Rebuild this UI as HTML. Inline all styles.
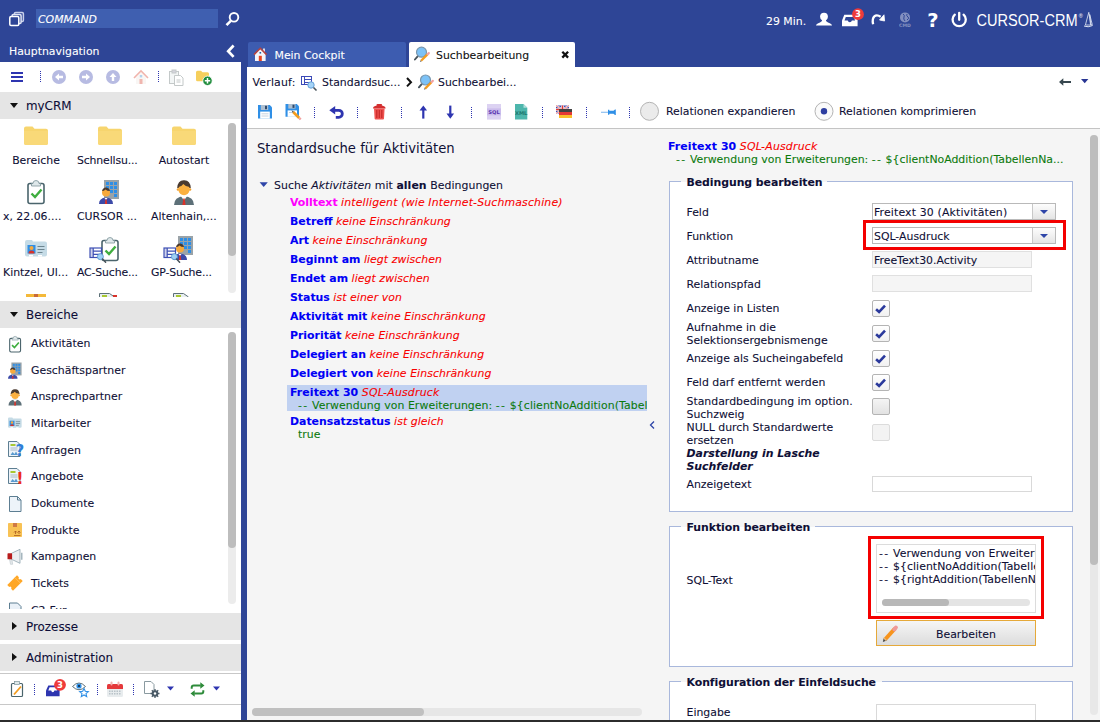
<!DOCTYPE html>
<html><head><meta charset="utf-8">
<style>
*{box-sizing:border-box;margin:0;padding:0}
html,body{width:1100px;height:722px;overflow:hidden;background:#fff}
body{position:relative;font-family:"DejaVu Sans","Liberation Sans",sans-serif;font-size:10.9px;color:#0f0f36;-webkit-text-stroke:.09px}
.abs{position:absolute}
#top{left:0;top:0;width:1100px;height:66.600px;background:#2e4596}
#leftblue{left:241px;top:62px;width:6px;height:660px;background:#2e4596}
#cmd{left:36px;top:9px;width:182px;height:19px;background:#3f5fb0;color:#fff;font-style:italic;font-size:10.9px;line-height:19px;padding-left:2px}
#hn{left:9px;top:43px;color:#fff;font-size:10.9px;line-height:16px}
.tab{top:42px;height:25px;line-height:25px;font-size:10.9px;border-radius:2px 2px 0 0}
#tab1{left:247.500px;width:158px;background:#3d5cb0;color:#fff}
#tab2{left:409px;width:166px;background:#fff;color:#111}
#left{left:0;top:62px;width:241px;height:653px;background:#fff;overflow:hidden}
.sec{left:0;width:241px;background:#e5e5e5;font-size:11.9px;line-height:27px;color:#0d0d38}
.sec span{position:absolute;left:26px}
.tri-d{position:absolute;left:9.500px;top:10.500px;width:0;height:0;border-left:4px solid transparent;border-right:4px solid transparent;border-top:5px solid #111}
.tri-r{position:absolute;left:12px;top:9px;width:0;height:0;border-top:4px solid transparent;border-bottom:4px solid transparent;border-left:5px solid #111}
.t{position:absolute;white-space:nowrap}
.b{font-weight:bold;color:#0000f5}
.r{font-style:italic;color:#f80000}
.g{color:#0c7a0c}
.m{font-weight:bold;color:#ff00ff}
.lab{position:absolute;width:66px;text-align:center;font-size:10.9px;line-height:14px;white-space:nowrap;overflow:visible}
.li{position:absolute;left:31px;font-size:10.9px;line-height:14px;white-space:nowrap}
.tr{position:absolute;left:0;white-space:nowrap}
.fs{position:absolute;border:1px solid #a9b8dc;background:#fff}
.lg{position:absolute;background:linear-gradient(#f5f5f5 5.700px,#fff 5.700px);font-weight:bold;line-height:14px;padding-left:5.500px;letter-spacing:-.05px;white-space:nowrap}
.fl{position:absolute;left:686.500px;line-height:14px;white-space:nowrap}
.sel{position:absolute;width:184px;height:17px;border:1px solid #b9b9b9;background:#fff;line-height:14px;padding-left:1px;white-space:nowrap}
.sel i{position:absolute;right:0;top:0;width:23px;height:15px;background:linear-gradient(#fdfdfd,#e4e4e4);border-left:1px solid #c8c8c8}
.sel i:after{content:"";position:absolute;left:7px;top:6px;border-left:4px solid transparent;border-right:4px solid transparent;border-top:4.500px solid #2e45a8}
.inp{position:absolute;height:16px;border:1px solid #d9d9d9;background:#fff;line-height:14px;padding-left:1px;white-space:nowrap}
.ro{background:#f5f5f5;border-color:#e0e0e0}
.cb{position:absolute;left:872px;width:17.500px;height:17px;border:1px solid #b4b4b4;border-radius:2px;background:linear-gradient(#fff,#f1f1f1)}

.cb.off{background:linear-gradient(#f4f4f4,#e2e2e2)}
.cb.dis{background:#f3f3f3;border-color:#dcdcdc}
.t,.lab,.li,.fl,#tree,#hn{margin-top:1px}
.lg{margin-top:1.800px}
.sec span{top:1px}
.sel,.inp{padding-top:1.500px}
#cmd{padding-top:1px}
.r{letter-spacing:.07px}
.hy{letter-spacing:1.300px}
</style></head><body>
<div id="top" class="abs"></div>
<div id="cmd" class="abs">COMMAND</div>
<div id="hn" class="abs">Hauptnavigation</div>
<div id="tab1" class="abs tab"><span class="t" style="left:27px">Mein Cockpit</span></div>
<div id="tab2" class="abs tab"><span class="t" style="left:27px">Suchbearbeitung</span></div>
<svg class="abs" style="left:0;top:0" width="1100" height="66" viewBox="0 0 1100 66">
 <!-- windows icon -->
 <g fill="#2e4596" stroke="#fff" stroke-width="1.500"><rect x="14.400" y="12.600" width="9" height="8.800" rx="1.200" stroke="#c8d0ea"/><rect x="12.100" y="14.600" width="9" height="8.800" rx="1.200" stroke="#dfe4f4"/><rect x="9.800" y="16.600" width="9" height="8.800" rx="1.200"/></g>
 <!-- search -->
 <circle cx="234" cy="17.300" r="4.300" fill="none" stroke="#fff" stroke-width="1.900"/><path d="M230.800 20.800l-4.300 4.300" stroke="#fff" stroke-width="2.600" stroke-linecap="butt"/>
 <!-- collapse chevron -->
 <path d="M233.600 45.500l-5.400 5.700 5.400 5.700" fill="none" stroke="#fff" stroke-width="2.700"/>
 <!-- user -->
 <circle cx="824" cy="16.600" r="3.900" fill="#fff"/><path d="M822.300 19.500h3.400q0 2.200 2.300 3 4 1.300 4 3h-16q0-1.700 4-3 2.300-.8 2.300-3z" fill="#fff"/>
 <!-- inbox -->
 <path d="M842 20.500l2.300-5.800h11l2.300 5.800v5.800h-15.600z" fill="#fff"/><path d="M844.500 20.500h3.200q.4 1.800 2.100 1.800t2.100-1.800h3.200l-1.300-3.500h-8z" fill="#2e4596"/>
 <circle cx="858" cy="14.200" r="5.900" fill="#ef3b3b"/><text x="858" y="17.300" font-size="8.500" font-weight="bold" fill="#fff" text-anchor="middle" font-family="DejaVu Sans">3</text>
 <!-- redo -->
 <path d="M873.100 24.300c-1.600-7.500 2.400-11 7.600-7.600" fill="none" stroke="#fff" stroke-width="2.300"/><path d="M879.500 20l5.100 1 -.6-6.200z" fill="#fff" stroke="#fff" stroke-width=".8" stroke-linejoin="round"/>
 <!-- globe dim -->
 <g opacity=".4"><circle cx="905" cy="17.400" r="5" fill="#fff"/><path d="M903 14q2 1 1 3t1 4M907 14q-1 2 1 3t-1 3" stroke="#2e4596" stroke-width="1" fill="none"/><text x="905" y="26.600" font-size="4.600" font-weight="bold" fill="#fff" text-anchor="middle" font-family="DejaVu Sans">CMD</text></g>
 <!-- ? -->
 <text x="933" y="26.600" font-size="19.500" font-weight="bold" fill="#fff" text-anchor="middle" font-family="DejaVu Sans">?</text>
 <!-- power -->
 <path d="M954.800 14.700a6.600 6.600 0 1 0 8.800 0" fill="none" stroke="#fff" stroke-width="2.300" stroke-linecap="round"/><path d="M959.200 12.800v7" stroke="#fff" stroke-width="2.300" stroke-linecap="round"/>
 <!-- brand -->
 <text x="976.500" y="25.500" font-size="15.600" fill="#fff" font-family="Liberation Sans" textLength="101" lengthAdjust="spacingAndGlyphs">CURSOR-CRM</text>
 <text x="1078.800" y="18.300" font-size="5.500" fill="#fff" font-family="Liberation Sans">®</text>
 <path d="M1088.800 12.300l1.800 12.700h-5.200zM1089.700 14.500l2.600 10.200h-1.400z" fill="none" stroke="#e4eaf6" stroke-width=".8"/><path d="M1084 26q4 1.800 8.600-.5" fill="none" stroke="#e4eaf6" stroke-width="1"/>
 <!-- tab icons -->
 <g><rect x="263" y="48.500" width="2" height="3.500" fill="#d8dbe8"/><path d="M255 54.300l5.300-5.300 5.300 5.300v6.700h-10.600z" fill="#f4f4f8"/><path d="M254 54.600l6.300-6.400 6.300 6.400" fill="none" stroke="#b8433e" stroke-width="1.500"/><rect x="258.800" y="55.800" width="3" height="5.200" fill="#e8441e"/><rect x="259.500" y="52" width="1.600" height="1.600" fill="#1f5fa8"/></g>
 <use href="#mag" x="414.500" y="46.200"/>
 <path d="M562.300 51.800l5.800 5.800M568.100 51.800l-5.800 5.800" stroke="#111" stroke-width="2.300"/>
</svg>
<div class="t" style="left:766px;top:13.500px;line-height:14px;color:#fff">29 Min.</div>
<div id="left" class="abs"></div>
<div id="leftblue" class="abs"></div>
<!-- left toolbar -->
<svg class="abs" style="left:0;top:62px" width="241" height="30" viewBox="0 0 241 30">
  <g fill="#2e35b0"><rect x="11" y="10" width="12" height="2"/><rect x="11" y="14" width="12" height="2"/><rect x="11" y="18" width="12" height="2"/></g>
  <g stroke="#2e35b0" stroke-width="1" stroke-dasharray="1 1"><line x1="40.5" y1="9" x2="40.5" y2="21"/><line x1="158.5" y1="9" x2="158.5" y2="21"/></g>
  <g fill="#b7bbe2"><circle cx="59" cy="15" r="7"/><circle cx="86" cy="15" r="7"/><circle cx="113" cy="15" r="7"/></g>
  <g fill="#fff"><path d="M55 15l4-3.5v2.3h4v2.4h-4v2.3z"/><path d="M90 15l-4-3.5v2.3h-4v2.4h4v2.3z"/><path d="M113 11l3.5 4h-2.3v4h-2.4v-4h-2.3z"/></g>
  <g opacity=".45"><path d="M134 16l7-7 7 7" fill="none" stroke="#e05a4a" stroke-width="1.6"/><path d="M136 15.5l5-5 5 5v6.5h-10z" fill="#f3ece8"/><rect x="139.5" y="17" width="3" height="5" fill="#e0604f"/><rect x="139.8" y="13" width="2.4" height="2.4" fill="#5aa0d8"/></g>
  <g opacity=".5" fill="none" stroke="#8a9494" stroke-width="1"><rect x="169.5" y="9.500" width="9" height="12" fill="#e8eeee"/><rect x="172" y="8" width="4" height="3" fill="#aab"/><path d="M174.500 13.500h6l2.500 2.500v7.500h-8.500z" fill="#fff"/><path d="M176.500 18h4M176.500 20h4"/></g>
  <path d="M196 10.200q0-1.500 1.500-1.500h3.500l1.500 1.500h5q1.500 0 1.500 1.500v6q0 1.500-1.500 1.500h-10q-1.500 0-1.500-1.500z" fill="#f6cf5c"/>
  <circle cx="207.500" cy="18.800" r="4.700" fill="#1f8c3c" stroke="#fff" stroke-width=".8"/><path d="M204.800 18.800h5.400M207.500 16.100v5.400" stroke="#fff" stroke-width="1.500"/>
</svg>
<!-- myCRM -->
<div class="abs sec" style="top:92px;height:27px"><i class="tri-d"></i><span>myCRM</span></div>
<div class="abs" id="mycrm" style="left:0;top:119px;width:241px;height:178px;overflow:hidden">
 <div class="abs" style="left:228px;top:4px;width:8px;height:170px;border-radius:4px;background:#ececec"></div>
 <div class="abs" style="left:228px;top:4px;width:8px;height:133px;border-radius:4px;background:#bdbdbd"></div>
 <svg class="abs" style="left:0;top:0" width="225" height="178" viewBox="0 119 225 178">
  <defs>
   <g id="folder"><path d="M0 2.500q0-2 2-2h6.500l2 2.200h11.500q2 0 2 2v12.300q0 2-2 2h-20q-2 0-2-2z" fill="#f7d56e"/><path d="M0 5h24v12q0 2-2 2h-20q-2 0-2-2z" fill="#f9d978"/></g>
   <g id="clip"><rect x="1" y="3.500" width="16" height="20" rx="2" fill="#fff" stroke="#4a646c" stroke-width="1.600"/><path d="M6 3.500q0-3 3-3t3 3h1.500v2.500h-9v-2.500z" fill="#dfe8ea" stroke="#7d949a" stroke-width=".8"/><path d="M4.500 13.500l3.500 3.500 6.500-7.500" fill="none" stroke="#3fae3f" stroke-width="2.400"/></g>
   <g id="build"><rect x="5" y="0" width="15" height="19" fill="#9aa3a8"/><g fill="#2f8fe6"><rect x="7" y="2" width="3" height="3"/><rect x="11" y="2" width="3" height="3"/><rect x="15" y="2" width="3" height="3"/><rect x="7" y="6" width="3" height="3"/><rect x="11" y="6" width="3" height="3"/><rect x="15" y="6" width="3" height="3"/><rect x="11" y="10" width="3" height="3"/><rect x="15" y="10" width="3" height="3"/><rect x="15" y="14" width="3" height="3"/></g><circle cx="7" cy="12.500" r="4" fill="#f7a93c"/><path d="M3 11q1-4 4.500-3.500 3 .5 3.500 3.500-3 0-4.500-1.500-1.500 1.500-3.500 1.500z" fill="#4a3a30"/><path d="M0 24q0-6 7-6.500 7 .5 7 6.500z" fill="#3c4aa8"/><path d="M5.500 18l1.500 2 1.500-2z" fill="#fff"/><path d="M6.400 19.500h1.200l.6 4.500h-2.400z" fill="#d8332a"/></g>
   <g id="man"><path d="M3.200 8q.5-8 6.800-7.800 6.300-.2 6.800 7.800z" fill="#4a3a30"/><circle cx="4" cy="9.500" r="1.300" fill="#f0a030"/><circle cx="16" cy="9.500" r="1.300" fill="#f0a030"/><ellipse cx="10" cy="9.200" rx="5.600" ry="6" fill="#fbb040"/><path d="M4.300 7q3.500-.5 5-3 2.500 3 6.400 3-.5-5-5.700-5.200-5.200.2-5.700 5.200z" fill="#4a3a30"/><path d="M0 25q0-8 10-9 10 1 10 9z" fill="#5d7078"/><path d="M6.800 16l3.200 4.500 3.200-4.500z" fill="#fff"/><path d="M9.300 18.500h1.400l.9 6.500h-3.200z" fill="#d8332a"/></g>
   <g id="idcard"><path d="M0 3q0-2 2-2h5l1 1.500h12q2 0 2 2v11q0 2-2 2h-18q-2 0-2-2z" fill="#c5dbe6"/><rect x="2.500" y="6" width="8" height="8.500" fill="#2f8fe6"/><circle cx="6.500" cy="9" r="2" fill="#f7a93c"/><path d="M3.500 14.500q0-3 3-3t3 3z" fill="#d8332a"/><path d="M12.500 7.500h7M12.500 10.500h7M12.500 13.500h5" stroke="#6d8590" stroke-width="1.200"/><path d="M4 17.500v-1.500h4v1.500M13 17.500v-1.500h4v1.500" fill="#fff"/></g>
   <g id="sl"><rect x="0" y="0" width="11.500" height="9.500" fill="#fff" stroke="#3f51b5" stroke-width="1.200"/><path d="M3.200 0v9.500M3.200 3.200h8.300M3.200 6.300h8.300" stroke="#3f51b5" stroke-width="1.200"/><rect x="0" y="0" width="3.200" height="9.500" fill="#3f51b5" opacity=".25"/><circle cx="10.400" cy="8.700" r="3" fill="#9fd0f5" stroke="#5a9bd0" stroke-width=".9"/><path d="M12.600 11l3 3.200" stroke="#46525a" stroke-width="1.500" stroke-linecap="round"/></g>
  </defs>
  <use href="#folder" x="24" y="126"/><use href="#folder" x="98" y="126"/><use href="#folder" x="172" y="126"/>
  <use href="#clip" x="27" y="180"/>
  <use href="#build" x="99" y="180"/>
  <use href="#man" x="174" y="180"/>
  <use href="#idcard" x="25" y="239"/>
  <use href="#clip" x="101" y="237"/><use href="#sl" x="90" y="248"/>
  <g transform="translate(173,236)"><use href="#build"/></g><use href="#sl" x="164" y="248"/>
  <rect x="26" y="294" width="20" height="4" fill="#f4b93a"/><rect x="34" y="294" width="4" height="4" fill="#c96a3a"/>
  <path d="M99.500 297v-3.500h10l5 3.500" fill="#e8eef0" stroke="#5d7078" stroke-width="1"/><rect x="102" y="295" width="5" height="3" fill="#a8c832"/><rect x="113" y="295" width="4" height="2" fill="#d8332a"/>
  <path d="M173.500 297v-3.500h10l5 3.500" fill="#e8eef0" stroke="#5d7078" stroke-width="1"/><rect x="176" y="295" width="5" height="3" fill="#a8c832"/>
 </svg>
 <div class="lab" style="left:3px;top:34px">Bereiche</div><div class="lab" style="left:77px;top:34px;text-align:left;letter-spacing:-.15px">Schnellsu...</div><div class="lab" style="left:151px;top:34px">Autostart</div>
 <div class="lab" style="left:3px;top:90px;text-align:left">x, 22.06....</div><div class="lab" style="left:77px;top:90px;text-align:left">CURSOR ...</div><div class="lab" style="left:151px;top:90px;text-align:left">Altenhain,...</div>
 <div class="lab" style="left:3px;top:146px;text-align:left">Kintzel, Ul...</div><div class="lab" style="left:77px;top:146px;text-align:left;letter-spacing:-.15px">AC-Suche...</div><div class="lab" style="left:151px;top:146px;text-align:left;letter-spacing:-.15px">GP-Suche...</div>
</div>
<!-- Bereiche -->
<div class="abs sec" style="top:301px;height:27px"><i class="tri-d"></i><span>Bereiche</span></div>
<div class="abs" id="ber" style="left:0;top:328px;width:241px;height:281px;overflow:hidden">
 <div class="abs" style="left:228px;top:4px;width:8px;height:272px;border-radius:4px;background:#ececec"></div>
 <div class="abs" style="left:228px;top:4px;width:8px;height:216px;border-radius:4px;background:#bdbdbd"></div>
 <div class="li" style="top:8px">Aktivitäten</div>
 <div class="li" style="top:35px">Geschäftspartner</div>
 <div class="li" style="top:61px">Ansprechpartner</div>
 <div class="li" style="top:88px">Mitarbeiter</div>
 <div class="li" style="top:115px">Anfragen</div>
 <div class="li" style="top:141px">Angebote</div>
 <div class="li" style="top:168px">Dokumente</div>
 <div class="li" style="top:195px">Produkte</div>
 <div class="li" style="top:221px">Kampagnen</div>
 <div class="li" style="top:248px">Tickets</div>
 <div class="li" style="top:275px">C2-Fur</div>
 <svg class="abs" style="left:0;top:0" width="30" height="281" viewBox="0 328 30 281">
 <g transform="translate(9,336) scale(.68)"><use href="#clip"/></g>
 <g transform="translate(8,362.500) scale(.68)"><use href="#build"/></g>
 <g transform="translate(8.500,389) scale(.66)"><use href="#man"/></g>
 <g transform="translate(8,417) scale(.62)"><use href="#idcard"/></g>
 <g id="doc1" transform="translate(0,441)"><path d="M8.500 .5h8.500l3 3v12h-11.500z" fill="#edf3f9" stroke="#5d7e92" stroke-width="1"/><rect x="10.500" y="3" width="5" height="2" fill="#a8c832"/><path d="M10.500 7h7M10.500 9h7" stroke="#9ab" stroke-width=".8"/><path d="M10.500 14l2-3 2 2 1.500-2.500 2 3.500z" fill="#5a9bd0"/></g>
 <text x="19.800" y="456" font-size="15" font-weight="bold" fill="#2f7fd8" text-anchor="middle" font-family="DejaVu Sans">?</text>
 <g transform="translate(0,468)"><path d="M8.500 .5h8.500l3 3v12h-11.500z" fill="#edf3f9" stroke="#5d7e92" stroke-width="1"/><rect x="10.500" y="3" width="5" height="2" fill="#a8c832"/><path d="M10.500 7h7M10.500 9h7" stroke="#9ab" stroke-width=".8"/><path d="M10.500 14l2-3 2 2 1.500-2.500 2 3.500z" fill="#5a9bd0"/></g>
 <text x="19.800" y="483.500" font-size="16" font-weight="bold" fill="#ee2a1e" text-anchor="middle" font-family="DejaVu Sans">!</text>
 <path d="M9.500 496.500h8l3.500 3.500v11.500h-11.500z" fill="#edf3f9" stroke="#5d7e92" stroke-width="1"/><path d="M17.500 496.500v3.500h3.500" fill="none" stroke="#5d7e92" stroke-width="1"/>
 <g transform="translate(0,1)"><rect x="8" y="522" width="14" height="14" rx=".8" fill="#f8c255"/><rect x="13" y="522" width="4" height="4" fill="#cf7a45"/><path d="M15.500 533v-3M14 531.500l1.500-1.500 1.500 1.500M19 533v-3M17.500 531.500l1.500-1.500 1.500 1.500M14 534.500h6.500" stroke="#a85a20" stroke-width=".8" fill="none"/></g>
 <g transform="translate(0,1.300)"><path d="M9.500 558l1 5h2.200l-.8-5z" fill="#e4e8ea" stroke="#b0bcc2" stroke-width=".5"/><path d="M11.500 552l8.500-4v14l-8.500-4z" fill="#eceff1" stroke="#90a4ae" stroke-width=".8"/><rect x="7.500" y="552" width="4.600" height="6" rx=".6" fill="#b71c1c"/><path d="M21.800 551.500v7" stroke="#90a4ae" stroke-width="1.200"/></g>
 <g transform="translate(15,583) rotate(-45) scale(.86)"><path d="M-8 -4.700h16v3.200a1.500 1.500 0 0 0 0 3v3.200h-16v-3.200a1.500 1.500 0 0 0 0-3z" fill="#ffa726"/><path d="M4.300 -4.700v9.400" stroke="#ffcc80" stroke-width=".7"/></g>
 <path d="M9.500 609v-6h8l3.500 3.500v2.500" fill="#eaf1f8" stroke="#5d7e92" stroke-width="1"/>
</svg>

</div>
<div class="abs sec" style="top:613px;height:27px"><i class="tri-r"></i><span>Prozesse</span></div>
<div class="abs sec" style="top:644px;height:27px"><i class="tri-r"></i><span>Administration</span></div>
<div class="abs" style="left:0;top:673px;width:241px;height:1px;background:#c8c8c8"></div>
<div class="abs" style="left:0;top:704px;width:241px;height:1px;background:#c8c8c8"></div>
<svg class="abs" style="left:0;top:674px" width="241" height="30" viewBox="0 674 241 30">
 <g stroke="#2e35b0" stroke-width="1" stroke-dasharray="1 1"><line x1="34.500" y1="684" x2="34.500" y2="696"/><line x1="97.500" y1="684" x2="97.500" y2="696"/><line x1="133.500" y1="684" x2="133.500" y2="696"/></g>
 <g><rect x="11.500" y="683.500" width="11" height="13" rx="1" fill="#fff" stroke="#4a646c" stroke-width="1.200"/><rect x="14.500" y="681.500" width="5" height="3" fill="#dfe8ea" stroke="#7d949a" stroke-width=".7"/><path d="M14 694.500l7-8" stroke="#f39c1f" stroke-width="1.800"/></g>
 <path d="M46 690.500l2.300-5h9l2.300 5v5.800h-13.600z" fill="#2e35b0"/><path d="M48.300 690.500h2.900q.3 1.700 1.600 1.700t1.600-1.700h2.900l-1.300-3.300h-6.400z" fill="#fff"/>
 <circle cx="60" cy="684.800" r="5.900" fill="#ef3b3b"/><text x="60" y="687.900" font-size="8.500" font-weight="bold" fill="#fff" text-anchor="middle" font-family="DejaVu Sans">3</text>
 <g><path d="M72.500 686.500q6.500-7 13 0-6.500 6.500-13 0z" fill="#fff" stroke="#5d7078" stroke-width="1"/><circle cx="79" cy="686" r="2.600" fill="#2f8fe6"/><circle cx="79" cy="686" r="1" fill="#123"/><path d="M84 688.500l1.300 2.800 3 .3-2.300 2 .7 3-2.700-1.600-2.700 1.600.7-3-2.300-2 3-.3z" fill="#fff" stroke="#2f8fe6" stroke-width="1.100"/></g>
 <g><rect x="107" y="684" width="16" height="13" rx="1.500" fill="#e8ecee"/><path d="M107 685.500q0-1.500 1.500-1.500h13q1.500 0 1.500 1.500v3.500h-16z" fill="#e5393b"/><rect x="110.500" y="681.500" width="2" height="4" rx="1" fill="#f2b0b0"/><rect x="117.500" y="681.500" width="2" height="4" rx="1" fill="#f2b0b0"/><g fill="#b8c2c8"><rect x="109" y="690.500" width="1.500" height="1.500"/><rect x="111.500" y="690.500" width="1.500" height="1.500"/><rect x="114" y="690.500" width="1.500" height="1.500"/><rect x="116.500" y="690.500" width="1.500" height="1.500"/><rect x="119" y="690.500" width="1.500" height="1.500"/><rect x="109" y="693" width="1.500" height="1.500"/><rect x="111.500" y="693" width="1.500" height="1.500"/><rect x="114" y="693" width="1.500" height="1.500"/><rect x="116.500" y="693" width="1.500" height="1.500"/><rect x="119" y="693" width="1.500" height="1.500"/></g></g>
 <g><path d="M144.500 681.500h6.500l3 3v9h-9.500z" fill="#fff" stroke="#8a9aa0" stroke-width="1"/><circle cx="155" cy="693.500" r="3.300" fill="#4a5a66"/><circle cx="155" cy="693.500" r="1.200" fill="#fff"/><path d="M155 689v9M150.500 693.500h9M151.800 690.300l6.400 6.400M158.200 690.300l-6.400 6.400" stroke="#4a5a66" stroke-width="1.300"/><circle cx="155" cy="693.500" r="1.200" fill="#fff"/></g>
 <path d="M167 686.500h7l-3.500 4z" fill="#2e35b0"/>
 <g fill="none" stroke="#2e8b3a" stroke-width="2"><path d="M191.700 688.800v-1.300q0-2 2-2h7"/><path d="M203.300 690.200v1.300q0 2-2 2h-7"/></g><path d="M200.300 682.300l4.200 3.200-4.200 3.200zM194.700 690.300l-4.200 3.200 4.200 3.200z" fill="#2e8b3a"/>
 <path d="M213 686.500h7l-3.500 4z" fill="#2e35b0"/>
</svg>


<!-- breadcrumbs -->
<div class="t" style="left:252.500px;top:75px;line-height:14px;letter-spacing:.2px">Verlauf:</div>
<div class="t" style="left:322px;top:75px;line-height:14px">Standardsuc...</div>
<div class="t" style="left:438px;top:75px;line-height:14px">Suchbearbei...</div>
<svg class="abs" style="left:247px;top:66px" width="853" height="62" viewBox="247 66 853 62">
 <defs>
  <g id="mag"><path d="M3.600 9.600l-3.200 3.700" stroke="#46525a" stroke-width="1.900" stroke-linecap="round"/><circle cx="7" cy="6" r="5" fill="#7cc2f7" stroke="#7a97ad" stroke-width="1.200"/><path d="M6.600 14.600l6.400-6.400" stroke="#f39c1f" stroke-width="2.200"/><path d="M13.200 8l1.100-1.100" stroke="#f2a0a0" stroke-width="2.200" stroke-linecap="round"/><path d="M5.400 15.800l.7-1.800 1.100 1.100z" fill="#555"/></g>
 </defs>
 <!-- std search icon -->
 <g><rect x="301.500" y="76.500" width="10" height="8" fill="#fff" stroke="#3c4ab8" stroke-width="1"/><path d="M304.500 76.500v8M304.500 79.500h7M304.500 82.500h7" stroke="#3c4ab8" stroke-width="1"/><circle cx="311" cy="85" r="3.200" fill="#a6d4f7" stroke="#5b9bd5" stroke-width=".9"/><path d="M313.500 87.500l3 3" stroke="#46525a" stroke-width="1.600"/></g>
 <path d="M407 78l4 4.200-4 4.200" fill="none" stroke="#111" stroke-width="2"/>
 <use href="#mag" x="418.500" y="74"/>
 <!-- back arrows -->
 <path d="M1071 82h-9" stroke="#37474f" stroke-width="2"/><path d="M1059 82l4.300-3.800v7.600z" fill="#37474f"/>
 <path d="M1081 79h7.400l-3.700 4.200z" fill="#283593"/>
 <!-- toolbar -->
 <g stroke="#2e35b0" stroke-width="1" stroke-dasharray="1 1"><line x1="314.500" y1="107" x2="314.500" y2="119"/><line x1="357.500" y1="107" x2="357.500" y2="119"/><line x1="401.500" y1="107" x2="401.500" y2="119"/><line x1="471.500" y1="107" x2="471.500" y2="119"/><line x1="542.500" y1="107" x2="542.500" y2="119"/><line x1="586.500" y1="107" x2="586.500" y2="119"/><line x1="629.500" y1="107" x2="629.500" y2="119"/></g>
 <g id="save"><path d="M258 105h11.800l2.200 2.200v11.400h-14z" fill="#2f8fe6"/><rect x="260.800" y="105" width="7.400" height="5" fill="#aebfd0"/><rect x="265" y="105.800" width="2" height="3.400" fill="#2d4a6e"/><rect x="260.200" y="111.600" width="9.600" height="7" fill="#fff"/><path d="M261.500 113.800h7M261.500 116h7" stroke="#b8c8d8" stroke-width=".8"/></g>
 <g><path d="M285.500 104h11.300l2.200 2.200v10.600h-13.500z" fill="#2f8fe6"/><rect x="288.300" y="104" width="7.200" height="4.600" fill="#aebfd0"/><rect x="292.500" y="104.700" width="2" height="3.200" fill="#2d4a6e"/><rect x="287.600" y="110.400" width="9.400" height="6.400" fill="#fff"/><path d="M289 112.500h5" stroke="#b8c8d8" stroke-width=".8"/><path d="M293.200 112l6 6" stroke="#f39c1f" stroke-width="2.600"/><path d="M299.400 118.200l1.300 1.300" stroke="#f2a0a0" stroke-width="2.400"/><path d="M291.500 110.300l1.200 2.400 1.200-1.200z" fill="#555"/></g>
 <path d="M334 110.300h4.800a3.500 3.500 0 0 1 0 7h-3" fill="none" stroke="#2e35b0" stroke-width="2.800"/><path d="M329.300 110.300l5.900-4.200v8.400z" fill="#2e35b0"/>
 <g><path d="M373 108.400q0-3 6.300-3.200 6.300.2 6.300 3.200z" fill="#d32f2f"/><rect x="376.500" y="104" width="5.600" height="2" rx="1" fill="#d32f2f"/><path d="M374 108.400h10.600l-.6 10.200q0 1-1 1h-7.400q-1 0-1-1z" fill="#ef5350"/><path d="M376.800 110v8M379.300 110v8M381.800 110v8" stroke="#c62828" stroke-width="1.200"/></g>
 <path d="M423.300 118.600v-11" stroke="#2e35b0" stroke-width="2.200"/><path d="M419.500 110.600l3.800-5.200 3.800 5.200z" fill="#2e35b0"/>
 <path d="M450.300 105.600v11" stroke="#2e35b0" stroke-width="2.200"/><path d="M446.500 113.600l3.800 5.200 3.800-5.200z" fill="#2e35b0"/>
 <g><rect x="487" y="104" width="14" height="15.600" fill="#dcd2f2"/><rect x="487" y="108.400" width="14" height="7" fill="#cbbcec"/><text x="494" y="113.900" font-size="5.200" font-weight="bold" fill="#5a35b0" text-anchor="middle" font-family="DejaVu Sans">SQL</text></g>
 <g><path d="M515 104h8.500l3.800 3.800v11.800h-12.300z" fill="#4db6ac"/><path d="M523.500 104v3.800h3.800z" fill="#b2dfdb"/><text x="521.200" y="115.400" font-size="5.200" font-weight="bold" fill="#1f7a70" text-anchor="middle" font-family="DejaVu Sans">XML</text></g>
 <g><rect x="556" y="105.500" width="13" height="8" fill="#3f51b5"/><path d="M556 105.500l13 8M569 105.500l-13 8" stroke="#fff" stroke-width="1.600"/><path d="M556 105.500l13 8M569 105.500l-13 8" stroke="#e53935" stroke-width=".6"/><path d="M562.500 105.500v8M556 109.500h13" stroke="#fff" stroke-width="2.600"/><path d="M562.500 105.500v8M556 109.500h13" stroke="#e53935" stroke-width="1.400"/><rect x="559" y="109" width="13" height="3" fill="#424242"/><rect x="559" y="112" width="13" height="3" fill="#e53935"/><rect x="559" y="115" width="13" height="3" fill="#fbc02d"/></g>
 <g><path d="M601 112.300h7" stroke="#8fc0f0" stroke-width="1.200"/><path d="M608 109.800h1.300v1h4.200l1.500-1.200h.8v5.400h-.8l-1.500-1.200h-4.200v1h-1.300z" fill="#2f8fe6"/></g>
 <circle cx="649.500" cy="111.300" r="9" fill="#ebebeb" stroke="#b4b4b4" stroke-width="1"/>
 <circle cx="824" cy="111.300" r="9" fill="#fafafa" stroke="#b4b4b4" stroke-width="1"/><circle cx="824" cy="111.300" r="3.200" fill="#2e3ea0"/>
</svg>
<div class="t" style="left:666px;top:104px;line-height:14px">Relationen expandieren</div>
<div class="t" style="left:839px;top:104px;line-height:14px">Relationen komprimieren</div>
<div class="abs" style="left:247px;top:128px;width:853px;height:1px;background:#c4c4c4"></div>
<div class="abs" style="left:247px;top:129px;width:853px;height:593px;background:#f5f5f5"></div>
<!-- tree -->
<div class="t" style="left:257px;top:139.500px;font-size:13.200px;line-height:16px;-webkit-text-stroke:0">Standardsuche für Aktivitäten</div>
<svg class="abs" style="left:258px;top:180px" width="12" height="9"><path d="M1.600 2.300h8.200l-4.100 4.800z" fill="#2e45a8"/></svg>
<div class="t" style="left:274px;top:178px;line-height:14px;letter-spacing:.06px">Suche <i>Aktivitäten</i> mit <b>allen</b> Bedingungen</div>
<div class="abs" style="left:287px;top:385px;width:360px;height:26px;background:#c0d1f1"></div>
<div id="tree" class="abs" style="left:290px;top:195px;width:357px;height:250px;overflow:hidden;line-height:13px">
 <div class="tr" style="top:0"><span class="m">Volltext</span> <span class="r" style="letter-spacing:.16px">intelligent (wie Internet-Suchmaschine)</span></div>
 <div class="tr" style="top:19px"><span class="b">Betreff</span> <span class="r">keine Einschränkung</span></div>
 <div class="tr" style="top:38px"><span class="b">Art</span> <span class="r">keine Einschränkung</span></div>
 <div class="tr" style="top:57px"><span class="b">Beginnt am</span> <span class="r">liegt zwischen</span></div>
 <div class="tr" style="top:76px"><span class="b">Endet am</span> <span class="r">liegt zwischen</span></div>
 <div class="tr" style="top:95px"><span class="b">Status</span> <span class="r">ist einer von</span></div>
 <div class="tr" style="top:114px"><span class="b">Aktivität mit</span> <span class="r">keine Einschränkung</span></div>
 <div class="tr" style="top:133px"><span class="b">Priorität</span> <span class="r">keine Einschränkung</span></div>
 <div class="tr" style="top:152px"><span class="b">Delegiert an</span> <span class="r">keine Einschränkung</span></div>
 <div class="tr" style="top:171px"><span class="b">Delegiert von</span> <span class="r">keine Einschränkung</span></div>
 <div class="tr" style="top:190px"><span class="b" style="letter-spacing:.12px">Freitext 30</span> <span class="r" style="letter-spacing:.2px">SQL-Ausdruck</span></div>
 <div class="tr g" style="top:203px;left:8px;letter-spacing:.07px"><span class="hy">--</span> Verwendung von Erweiterungen: <span class="hy">--</span> ${clientNoAddition(TabellenName)}</div>
 <div class="tr" style="top:219px"><span class="b">Datensatzstatus</span> <span class="r">ist gleich</span></div>
 <div class="tr g" style="top:232px;left:8px">true</div>
</div>
<svg class="abs" style="left:648px;top:420px" width="8" height="10"><path d="M6 1.500l-3.500 3.500 3.500 3.500" fill="none" stroke="#2e45a8" stroke-width="1.300"/></svg>
<!-- h scrollbar -->
<div class="abs" style="left:252px;top:708px;width:390px;height:7.500px;border-radius:4px;background:#e6e6e6"></div>
<div class="abs" style="left:252px;top:708px;width:172px;height:7.500px;border-radius:4px;background:#c0c0c0"></div>
<!-- v scrollbar -->
<div class="abs" style="left:1090px;top:135px;width:8px;height:580px;border-radius:4px;background:#e8e8e8"></div>
<div class="abs" style="left:1090px;top:135px;width:8px;height:430px;border-radius:4px;background:#bdbdbd"></div>
<div class="t" style="left:668px;top:139px;line-height:14px;font-size:10.900px"><span class="b" style="letter-spacing:.12px">Freitext 30</span> <span class="r" style="letter-spacing:.2px">SQL-Ausdruck</span></div>
<div class="t g" style="left:676px;top:152px;line-height:14px"><span class="hy">--</span> Verwendung von Erweiterungen: <span class="hy">--</span> ${clientNoAddition(TabellenNa...</div>
<!-- fieldsets -->
<div class="fs" style="left:669px;top:181px;width:404px;height:331px"></div>
<div class="lg" style="left:681px;top:174px;width:146px">Bedingung bearbeiten</div>
<div class="fs" style="left:669px;top:526px;width:404px;height:141px"></div>
<div class="lg" style="left:681px;top:519px;width:134px">Funktion bearbeiten</div>
<div class="fs" style="left:669px;top:681px;width:404px;height:60px"></div>
<div class="lg" style="left:681px;top:674px;width:201px">Konfiguration der Einfeldsuche</div>
<!-- labels -->
<div class="fl" style="top:205px">Feld</div>
<div class="fl" style="top:229px">Funktion</div>
<div class="fl" style="top:253px">Attributname</div>
<div class="fl" style="top:277px">Relationspfad</div>
<div class="fl" style="top:301px">Anzeige in Listen</div>
<div class="fl" style="top:321px;line-height:12.500px">Aufnahme in die<br>Selektionsergebnismenge</div>
<div class="fl" style="top:351px">Anzeige als Sucheingabefeld</div>
<div class="fl" style="top:375px">Feld darf entfernt werden</div>
<div class="fl" style="top:395.300px;line-height:12.500px">Standardbedingung im option.<br>Suchzweig</div>
<div class="fl" style="top:421px;line-height:12.500px">NULL durch Standardwerte<br>ersetzen</div>
<div class="fl" style="top:447px;line-height:12.500px;font-weight:bold;font-style:italic">Darstellung in Lasche<br>Suchfelder</div>
<div class="fl" style="top:476.500px">Anzeigetext</div>
<div class="fl" style="top:573px">SQL-Text</div>
<div class="fl" style="top:705px">Eingabe</div>
<!-- selects -->
<div class="sel" style="left:872px;top:203px;letter-spacing:.15px">Freitext 30 (Aktivitäten)<i></i></div>
<div class="sel" style="left:872px;top:227px">SQL-Ausdruck<i></i></div>
<div class="abs" style="left:863px;top:220px;width:203px;height:29.500px;border:3px solid #f40000"></div>
<div class="inp ro" style="left:872px;top:251px;width:160px;height:17px">FreeText30.Activity</div>
<div class="inp ro" style="left:872px;top:275px;width:160px;height:17px"></div>
<div class="cb on" style="top:299.500px"><svg width="17" height="17" style="position:absolute;left:-1px;top:-1px"><path d="M4.100 9.200l3 2.700 5.900-6.200" fill="none" stroke="#2b3a9c" stroke-width="2.600"/></svg></div>
<div class="cb on" style="top:324.500px"><svg width="17" height="17" style="position:absolute;left:-1px;top:-1px"><path d="M4.100 9.200l3 2.700 5.900-6.200" fill="none" stroke="#2b3a9c" stroke-width="2.600"/></svg></div>
<div class="cb on" style="top:349.500px"><svg width="17" height="17" style="position:absolute;left:-1px;top:-1px"><path d="M4.100 9.200l3 2.700 5.900-6.200" fill="none" stroke="#2b3a9c" stroke-width="2.600"/></svg></div>
<div class="cb on" style="top:373.500px"><svg width="17" height="17" style="position:absolute;left:-1px;top:-1px"><path d="M4.100 9.200l3 2.700 5.900-6.200" fill="none" stroke="#2b3a9c" stroke-width="2.600"/></svg></div>
<div class="cb off" style="top:398px"></div>
<div class="cb dis" style="top:424px"></div>
<div class="inp" style="left:872px;top:476px;width:160px"></div>
<!-- sql textarea -->
<div class="abs" style="left:868px;top:536px;width:176px;height:83px;border:3px solid #f40000"></div>
<div class="abs" style="left:876px;top:544px;width:160px;height:69px;border:1px solid #dcdcdc;background:#fff;overflow:hidden;line-height:13.200px;white-space:nowrap;padding:2px 0 0 2px;letter-spacing:.05px"><span class="hy">--</span> Verwendung von Erweiterungen:<br><span class="hy">--</span> ${clientNoAddition(TabellenName)}<br><span class="hy">--</span> ${rightAddition(TabellenName)}</div>
<div class="abs" style="left:882px;top:599px;width:148px;height:7px;border-radius:4px;background:#e4e4e4"></div>
<div class="abs" style="left:882px;top:599px;width:67px;height:7px;border-radius:4px;background:#b8b8b8"></div>
<div class="abs" style="left:876px;top:620px;width:160px;height:26px;border:1px solid #e5a93a;background:linear-gradient(#f6f6f6,#dcdcdc);line-height:25px"><span class="t" style="left:59px">Bearbeiten</span>
<svg class="abs" style="left:4px;top:3px" width="20" height="20"><path d="M4.500 15l9.500-10.500" stroke="#f7941d" stroke-width="4"/><path d="M1.800 18l1-4.200 3.200 2.800z" fill="#4a4a4a"/><path d="M3 13.400l2.900 2.900 -1 .8 -2.600-2.600z" fill="#f5c07a"/><path d="M13.300 5.300l1.600-1.800" stroke="#ef9a9a" stroke-width="4" stroke-linecap="round"/></svg></div>
<div class="inp" style="left:876px;top:704px;width:160px;height:18px"></div>

<div class="abs" style="left:0;top:719.600px;width:1100px;height:2.400px;background:#2c2c2c"></div>

</body></html>
